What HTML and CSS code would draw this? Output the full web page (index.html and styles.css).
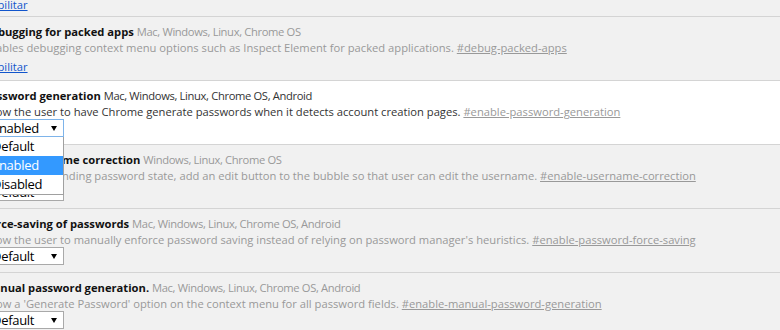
FILE: index.html
```html
<!DOCTYPE html>
<html lang="en">
  <head>
    <meta charset="UTF-8" />
    <meta name="viewport" content="width=device-width, initial-scale=1.0" />
    <title>Flags</title>
    <link rel="stylesheet" href="styles.css">
  </head>
  <body>
    <div class="flags">
      <div class="flag">
        <div class="flag-title">
          <span class="flag-name">Enable experimental canvas features</span>
          <span class="flag-platforms">Mac, Windows, Linux, Chrome OS</span>
        </div>
        <div class="flag-desc">
          Enables the use of experimental canvas features which are still in development.
          <a class="flag-perma" href="#">#enable-experimental-canvas-features</a>
        </div>
        <div class="flag-action"><a class="flag-toggle" href="#">Habilitar</a></div>
      </div>

      <div class="flag">
        <div class="flag-title">
          <span class="flag-name">Debugging for packed apps</span>
          <span class="flag-platforms">Mac, Windows, Linux, Chrome OS</span>
        </div>
        <div class="flag-desc">
          Enables debugging context menu options such as Inspect Element for packed applications.
          <a class="flag-perma" href="#">#debug-packed-apps</a>
        </div>
        <div class="flag-action"><a class="flag-toggle" href="#">Habilitar</a></div>
      </div>

      <div class="flag switched">
        <div class="flag-title">
          <span class="flag-name">Password generation</span>
          <span class="flag-platforms">Mac, Windows, Linux, Chrome OS, Android</span>
        </div>
        <div class="flag-desc">
          Allow the user to have Chrome generate passwords when it detects account creation pages.
          <a class="flag-perma" href="#">#enable-password-generation</a>
        </div>
        <div class="select open">
          <span>Enabled</span>
          <svg class="arrow" width="6" height="5" viewBox="0 0 6 5"><polygon points="0,0 6,0 3,5" /></svg>
          <div class="dropdown">
            <div class="option">Default</div>
            <div class="option selected">Enabled</div>
            <div class="option">Disabled</div>
          </div>
        </div>
      </div>

      <div class="flag">
        <div class="flag-title">
          <span class="flag-name">Enable username correction</span>
          <span class="flag-platforms">Windows, Linux, Chrome OS</span>
        </div>
        <div class="flag-desc">
          When in the pending password state, add an edit button to the bubble so that user can edit the username.
          <a class="flag-perma" href="#">#enable-username-correction</a>
        </div>
        <div class="select">
          <span>Default</span>
          <svg class="arrow" width="6" height="5" viewBox="0 0 6 5"><polygon points="0,0 6,0 3,5" /></svg>
        </div>
      </div>

      <div class="flag">
        <div class="flag-title">
          <span class="flag-name">Force-saving of passwords</span>
          <span class="flag-platforms">Mac, Windows, Linux, Chrome OS, Android</span>
        </div>
        <div class="flag-desc">
          Allow the user to manually enforce password saving instead of relying on password manager's heuristics.
          <a class="flag-perma" href="#">#enable-password-force-saving</a>
        </div>
        <div class="select">
          <span>Default</span>
          <svg class="arrow" width="6" height="5" viewBox="0 0 6 5"><polygon points="0,0 6,0 3,5" /></svg>
        </div>
      </div>

      <div class="flag">
        <div class="flag-title">
          <span class="flag-name">Manual password generation.</span>
          <span class="flag-platforms">Mac, Windows, Linux, Chrome OS, Android</span>
        </div>
        <div class="flag-desc">
          Show a 'Generate Password' option on the context menu for all password fields.
          <a class="flag-perma" href="#">#enable-manual-password-generation</a>
        </div>
        <div class="select">
          <span>Default</span>
          <svg class="arrow" width="6" height="5" viewBox="0 0 6 5"><polygon points="0,0 6,0 3,5" /></svg>
        </div>
      </div>
    </div>
  </body>
</html>
```

FILE: styles.css
```css
body {
  margin: 0;
  background: #f1f1f1;
  font-family: "Open Sans", sans-serif;
  font-size: 11.2px;
  color: #999;
  overflow: hidden;
}
.flags {
  margin: -45px 0 0 -17px;
}
.flag {
  padding: 7px 0;
  border-bottom: 1px solid #d4d4d4;
  white-space: nowrap;
}
.flag:first-child {
  padding-top: 5px;
}
.flag:first-child .flag-action {
  margin: 6px 0 -4px;
}
.flag.switched {
  background: #fff;
}
.flag-title {
  height: 16px;
  line-height: 16px;
}
.flag-desc {
  height: 15px;
  line-height: 15px;
}
.flag-name {
  font-weight: 700;
  color: #111;
}
.flag-platforms {
  letter-spacing: -0.35px;
}
.switched .flag-platforms,
.switched .flag-desc {
  color: #333;
}
.flag-perma {
  color: #999;
  text-decoration: underline;
}
.flag-action {
  margin: 4px 0 -2px;
  height: 16px;
  line-height: 16px;
}
.flag-toggle {
  color: #15c;
  text-decoration: underline;
}
.select {
  position: relative;
  display: flex;
  align-items: center;
  justify-content: space-between;
  box-sizing: border-box;
  width: 81px;
  height: 18px;
  padding: 0 6px 0 8px;
  background: #fff;
  border: 1px solid #a9a9a9;
  color: #000;
  font-size: 13px;
  letter-spacing: -0.3px;
  line-height: 16px;
}
.select.open {
  border-color: #7eb4ea;
}
.arrow {
  fill: #000;
}
.dropdown {
  position: absolute;
  top: calc(100% + 1px);
  left: -1px;
  z-index: 1;
  box-sizing: border-box;
  width: 81px;
  background: #fff;
  border: 1px solid #a0a0a0;
  border-top: none;
}
.option {
  height: 19px;
  line-height: 19px;
  padding-left: 8px;
}
.option.selected {
  background: #3399ff;
  color: #fff;
}
```
